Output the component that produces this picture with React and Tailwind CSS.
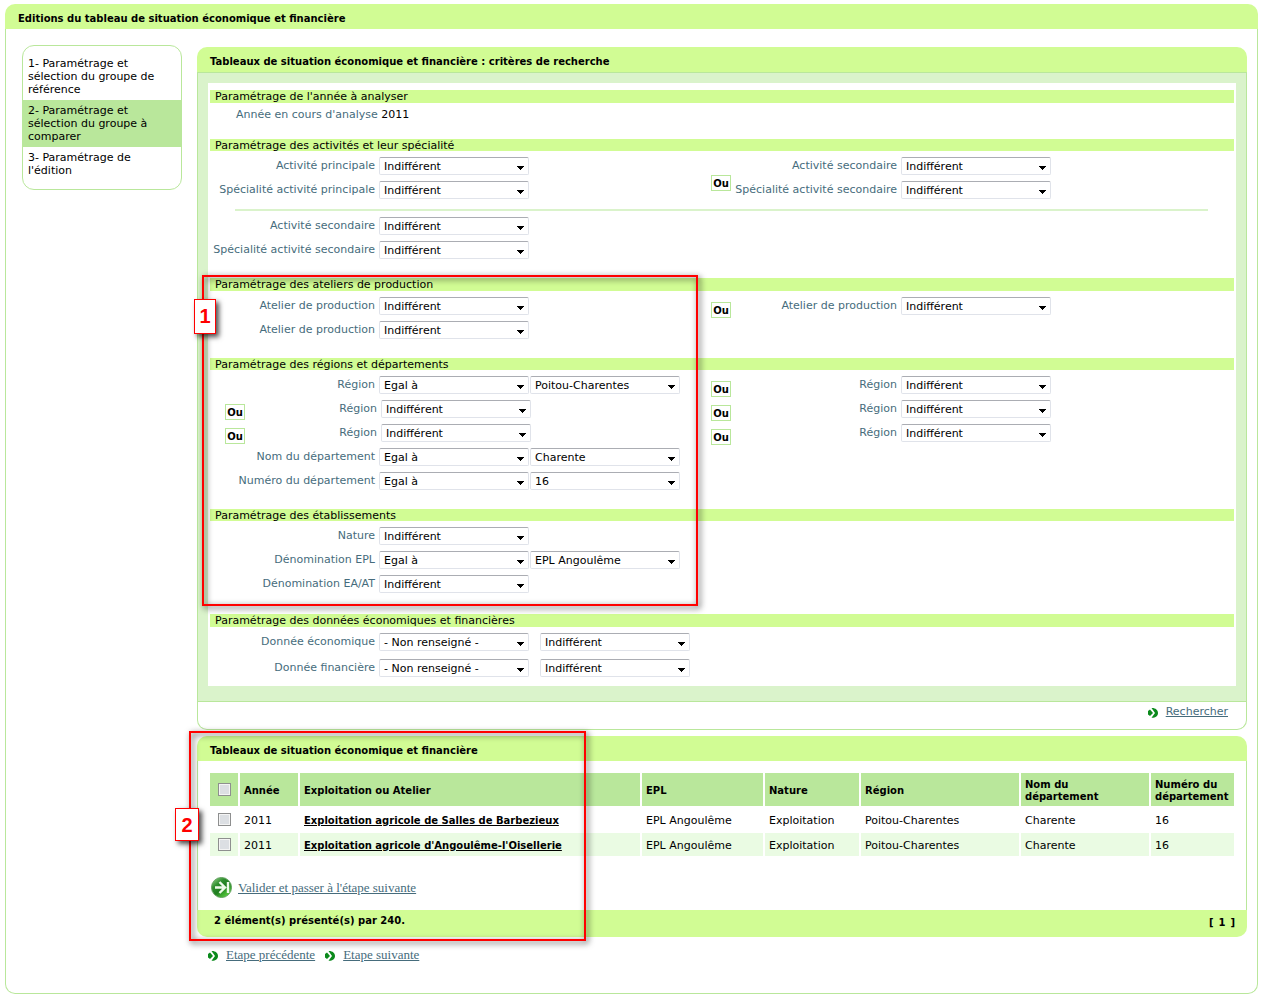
import React, { useState } from 'react';

const steps = [
  '1- Paramétrage et sélection du groupe de référence',
  '2- Paramétrage et sélection du groupe à comparer',
  "3- Paramétrage de l'édition"
];

const rows = [
  { id: 1, name: 'Exploitation agricole de Salles de Barbezieux' },
  { id: 2, name: "Exploitation agricole d'Angoulême-l'Oisellerie" }
];

const Select = ({ id, value = 'Indifférent', label }) => (
  <div className="relative w-[150px] shrink-0">
    <select
      id={id}
      aria-label={label}
      defaultValue={value}
      className="block h-[18px] w-full appearance-none rounded-xs border border-[#e0e3ea] border-t-[#abadb3] bg-white pl-1 pr-4 pt-0.5 text-[11px] leading-[14px] text-black"
    >
      <option>{value}</option>
    </select>
    <svg className="pointer-events-none absolute right-[5px] top-[9px]" width="7" height="4" viewBox="0 0 7 4" shapeRendering="crispEdges">
      <path d="M0 0h7v1H6v1H5v1H4v1H3V3H2V2H1V1H0z" fill="#000" />
    </svg>
  </div>
);

const Ou = ({ className = 'mt-1' }) => (
  <span className={`flex h-4 w-5 shrink-0 items-center justify-center border border-[#b9e79b] bg-white pt-0.5 text-[10px] font-bold ${className}`}>
    Ou
  </span>
);

const Field = ({ id, label, value, second, secondGap = 'ml-px', width = 'w-[165px]' }) => (
  <div className="flex h-[18px]">
    <label htmlFor={id} className={`mr-1 shrink-0 whitespace-nowrap text-right leading-[17px] text-[#466c7c] ${width}`}>
      {label}
    </label>
    <Select id={id} value={value} />
    {second && (
      <div className={secondGap}>
        <Select label={`${label} : valeur`} value={second} />
      </div>
    )}
  </div>
);

const OrField = ({ id, label }) => (
  <div className="flex h-[18px]">
    <Ou className="mt-[5px]" />
    <Field id={id} label={label} width="w-[166px]" />
  </div>
);

const Section = ({ title, children, tall, className = 'pb-[19px]' }) => (
  <section className={className}>
    <h3 className={`mb-1.5 bg-[#d1fc94] pl-[5px] leading-[14px] ${tall ? 'h-[13px]' : 'h-3'}`}>{title}</h3>
    {children}
  </section>
);

const Columns = ({ left, right }) => (
  <div className="flex">
    <div className="flex w-[501px] shrink-0 flex-col gap-1.5">{left}</div>
    <div className="flex flex-col gap-1.5">{right}</div>
  </div>
);

const PanelTitle = ({ children }) => (
  <h2 className="h-[25px] rounded-t-[10px] bg-[#d1fc94] pl-[13px] text-[10px] font-bold leading-[29px]">{children}</h2>
);

const ArrowBullet = () => (
  <svg width="10" height="11" viewBox="0 0 10 11" className="shrink-0">
    <path d="M0 4l2-1.500 3 3.500-3 3L0 7.500z" fill="#0b8a1c" />
    <path d="M3.500 1C7.500 0.800 10 3 10 6S7.500 11 3.500 10.800L7 6z" fill="#0b8a1c" />
  </svg>
);

const NextIcon = () => (
  <svg width="21" height="21" viewBox="0 0 21 21" className="shrink-0">
    <defs>
      <linearGradient id="ball" x1="0" y1="0" x2="0.800" y2="1">
        <stop offset="0" stopColor="#a5dc95" />
        <stop offset="0.350" stopColor="#2f8f2f" />
        <stop offset="0.600" stopColor="#1f7d1f" />
        <stop offset="1" stopColor="#62dc42" />
      </linearGradient>
    </defs>
    <circle cx="10.500" cy="10.500" r="10" fill="url(#ball)" stroke="#5f9f5c" />
    <path d="M4 10.500h9M8.500 5l5.500 5.500-5.500 5.500M17 5v11" fill="none" stroke="#eefaea" strokeWidth="2.400" />
  </svg>
);

const Callout = ({ number, box, badge }) => (
  <div className={`pointer-events-none absolute z-10 ${box}`}>
    <div className="absolute inset-0 border-2 border-[#ff0000] drop-shadow-[2px_2px_3px_rgba(0,0,0,0.8)]"></div>
    <div className={`absolute flex justify-center border border-[#ff0000] bg-white font-['Liberation_Sans',sans-serif] text-xl font-bold leading-8 text-[#ff0000] shadow-[3px_3px_5px_rgba(0,0,0,0.7)] ${badge}`}>
      {number}
    </div>
  </div>
);

const App = () => {
  const [checked, setChecked] = useState([]);

  const toggle = (id) => {
    setChecked(checked.includes(id) ? checked.filter((c) => c !== id) : [...checked, id]);
  };

  const toggleAll = () => {
    setChecked(checked.length === rows.length ? [] : rows.map((row) => row.id));
  };

  const checkbox = 'block size-[13px] appearance-none border border-[#8e8f8f] bg-[#dcdfe3] shadow-[inset_0_0_0_1px_#f4f4f4] checked:bg-[#3c7a3a]';
  const serifLink = "font-['Liberation_Serif',serif] text-[13px] leading-4 text-[#466c7c] underline";

  return (
    <div className="bg-white px-[5px] pb-1.5 pt-1 font-['DejaVu_Sans',sans-serif] text-[11px] leading-3 text-black">
      <h1 className="h-[25px] rounded-t-[10px] bg-[#d1fc94] pl-[13px] text-[10px] font-bold leading-[29px]">
        Editions du tableau de situation économique et financière
      </h1>
      <div className="flex items-start rounded-b-[10px] border border-t-0 border-[#b9e79b] pb-[30px] pl-4 pr-2.5 pt-4">
        <nav className="w-40 shrink-0 rounded-xl border border-[#b9e79b] pb-2 pt-[7px]">
          {steps.map((step, index) => (
            <a
              key={step}
              href="#"
              className={`block px-[5px] py-1 leading-[13px] ${index === 1 ? 'bg-[#b9e79b]' : ''}`}
            >
              {step}
            </a>
          ))}
        </nav>

        <main className="ml-[15px] min-w-0 flex-1 pt-0.5">
          <form>
            <PanelTitle>Tableaux de situation économique et financière : critères de recherche</PanelTitle>
            <div className="border border-[#b9e79b] bg-[#daf3cb] px-2.5 pb-[15px] pt-2.5">
              <div className="bg-white px-0.5 pb-[9px] pt-[7px]">
                <Section title="Paramétrage de l'année à analyser" tall className="pb-[18px]">
                  <p className="pl-[26px]">
                    <span className="text-[#466c7c]">Année en cours d'analyse</span> 2011
                  </p>
                </Section>

                <Section title="Paramétrage des activités et leur spécialité">
                  <Columns
                    left={
                      <>
                        <Field id="activite1" label="Activité principale" />
                        <Field id="specialite1" label="Spécialité activité principale" />
                      </>
                    }
                    right={
                      <div className="flex">
                        <Ou className="mb-2 self-end" />
                        <div className="flex flex-col gap-1.5">
                          <Field id="activite2" label="Activité secondaire" width="w-[166px]" />
                          <Field id="specialite2" label="Spécialité activité secondaire" width="w-[166px]" />
                        </div>
                      </div>
                    }
                  />
                  <hr className="mb-1.5 ml-[25px] mr-[26px] mt-2.5 border-t-2 border-[#daf3cb]" />
                  <div className="flex flex-col gap-1.5">
                    <Field id="activite3" label="Activité secondaire" />
                    <Field id="specialite3" label="Spécialité activité secondaire" />
                  </div>
                </Section>

                <div className="relative">
                  <Section title="Paramétrage des ateliers de production" tall>
                    <Columns
                      left={
                        <>
                          <Field id="atelier1" label="Atelier de production" />
                          <Field id="atelier2" label="Atelier de production" />
                        </>
                      }
                      right={<OrField id="atelier3" label="Atelier de production" />}
                    />
                  </Section>

                  <Section title="Paramétrage des régions et départements">
                    <Columns
                      left={
                        <>
                          <Field id="region1" label="Région" value="Egal à" second="Poitou-Charentes" />
                          <div className="flex h-[18px] pl-[15px]">
                            <Ou />
                            <Field id="region2" label="Région" width="w-[132px]" />
                          </div>
                          <div className="flex h-[18px] pl-[15px]">
                            <Ou />
                            <Field id="region3" label="Région" width="w-[132px]" />
                          </div>
                          <Field id="nomDep" label="Nom du département" value="Egal à" second="Charente" />
                          <Field id="numDep" label="Numéro du département" value="Egal à" second="16" />
                        </>
                      }
                      right={
                        <>
                          <OrField id="region4" label="Région" />
                          <OrField id="region5" label="Région" />
                          <OrField id="region6" label="Région" />
                        </>
                      }
                    />
                  </Section>

                  <Section title="Paramétrage des établissements" className="pb-[21px]">
                    <div className="flex flex-col gap-1.5">
                      <Field id="nature" label="Nature" />
                      <Field id="epl" label="Dénomination EPL" value="Egal à" second="EPL Angoulême" />
                      <Field id="eaat" label="Dénomination EA/AT" />
                    </div>
                  </Section>

                  <Callout
                    number="1"
                    box="-left-2 -top-[3px] bottom-2 w-[496px]"
                    badge="-left-2 top-6 h-[35px] w-[22px]"
                  />
                </div>

                <Section title="Paramétrage des données économiques et financières" tall className="pb-0">
                  <div className="flex flex-col gap-2">
                    <Field id="eco" label="Donnée économique" value="- Non renseigné -" second="Indifférent" secondGap="ml-[11px]" />
                    <Field id="fin" label="Donnée financière" value="- Non renseigné -" second="Indifférent" secondGap="ml-[11px]" />
                  </div>
                </Section>
              </div>
            </div>
            <div className="flex h-7 items-start justify-end rounded-b-[10px] border border-t-0 border-[#b9e79b] pr-[18px] pt-1">
              <a href="#" className="flex items-center gap-2 text-[#466c7c]">
                <ArrowBullet />
                <span className="underline">Rechercher</span>
              </a>
            </div>
          </form>

          <div className="relative mt-1.5">
            <PanelTitle>Tableaux de situation économique et financière</PanelTitle>
            <div className="border-x border-[#b9e79b] px-2.5 pb-3 pt-2.5">
              <table className="w-full table-fixed border-separate border-spacing-[2px] text-left">
                <colgroup>
                  <col className="w-7" />
                  <col className="w-[58px]" />
                  <col />
                  <col className="w-[121px]" />
                  <col className="w-[94px]" />
                  <col className="w-[158px]" />
                  <col className="w-32" />
                  <col className="w-[83px]" />
                </colgroup>
                <thead>
                  <tr className="h-[33px] bg-[#b9e79b] text-[10px]">
                    <th className="pl-2">
                      <input
                        type="checkbox"
                        aria-label="Tout sélectionner"
                        className={checkbox}
                        checked={checked.length === rows.length}
                        onChange={toggleAll}
                      />
                    </th>
                    <th className="px-1 pt-0.5">Année</th>
                    <th className="px-1 pt-0.5">Exploitation ou Atelier</th>
                    <th className="px-1 pt-0.5">EPL</th>
                    <th className="px-1 pt-0.5">Nature</th>
                    <th className="px-1 pt-0.5">Région</th>
                    <th className="px-1 pt-0.5">Nom du<br />département</th>
                    <th className="px-1 pt-0.5">Numéro du département</th>
                  </tr>
                </thead>
                <tbody>
                  {rows.map((row) => (
                    <tr key={row.id} className="h-[23px] even:bg-[#eafbe3]">
                      <td className="pl-2">
                        <input
                          type="checkbox"
                          aria-label={row.name}
                          className={checkbox}
                          checked={checked.includes(row.id)}
                          onChange={() => toggle(row.id)}
                        />
                      </td>
                      <td className="px-1 pt-0.5">2011</td>
                      <td className="px-1 pt-0.5 text-[10px]">
                        <a href="#" className="font-bold underline">{row.name}</a>
                      </td>
                      <td className="px-1 pt-0.5">EPL Angoulême</td>
                      <td className="px-1 pt-0.5">Exploitation</td>
                      <td className="px-1 pt-0.5">Poitou-Charentes</td>
                      <td className="px-1 pt-0.5">Charente</td>
                      <td className="px-1 pt-0.5">16</td>
                    </tr>
                  ))}
                </tbody>
              </table>
              <a href="#" className={`mt-[19px] flex items-center gap-1.5 pl-[3px] ${serifLink}`}>
                <NextIcon />
                Valider et passer à l'étape suivante
              </a>
            </div>
            <div className="flex h-[27px] justify-between rounded-b-[10px] bg-[#d1fc94] pl-[17px] pr-3 text-[10px] font-bold">
              <span className="pt-[5px]">2 élément(s) présenté(s) par 240.</span>
              <span className="flex gap-[5px] pt-[7px]">
                <span>[</span>
                <span>1</span>
                <span>]</span>
              </span>
            </div>

            <Callout
              number="2"
              box="-left-2 -top-[5px] -bottom-1 w-[397px]"
              badge="-left-[14px] top-[77px] h-[33px] w-6"
            />
          </div>

          <div className="mt-2.5 flex gap-2.5 pl-[11px]">
            <a href="#" className={`flex items-center gap-2 ${serifLink}`}>
              <ArrowBullet />
              Etape précédente
            </a>
            <a href="#" className={`flex items-center gap-2 ${serifLink}`}>
              <ArrowBullet />
              Etape suivante
            </a>
          </div>
        </main>
      </div>
    </div>
  );
};

export default App;
